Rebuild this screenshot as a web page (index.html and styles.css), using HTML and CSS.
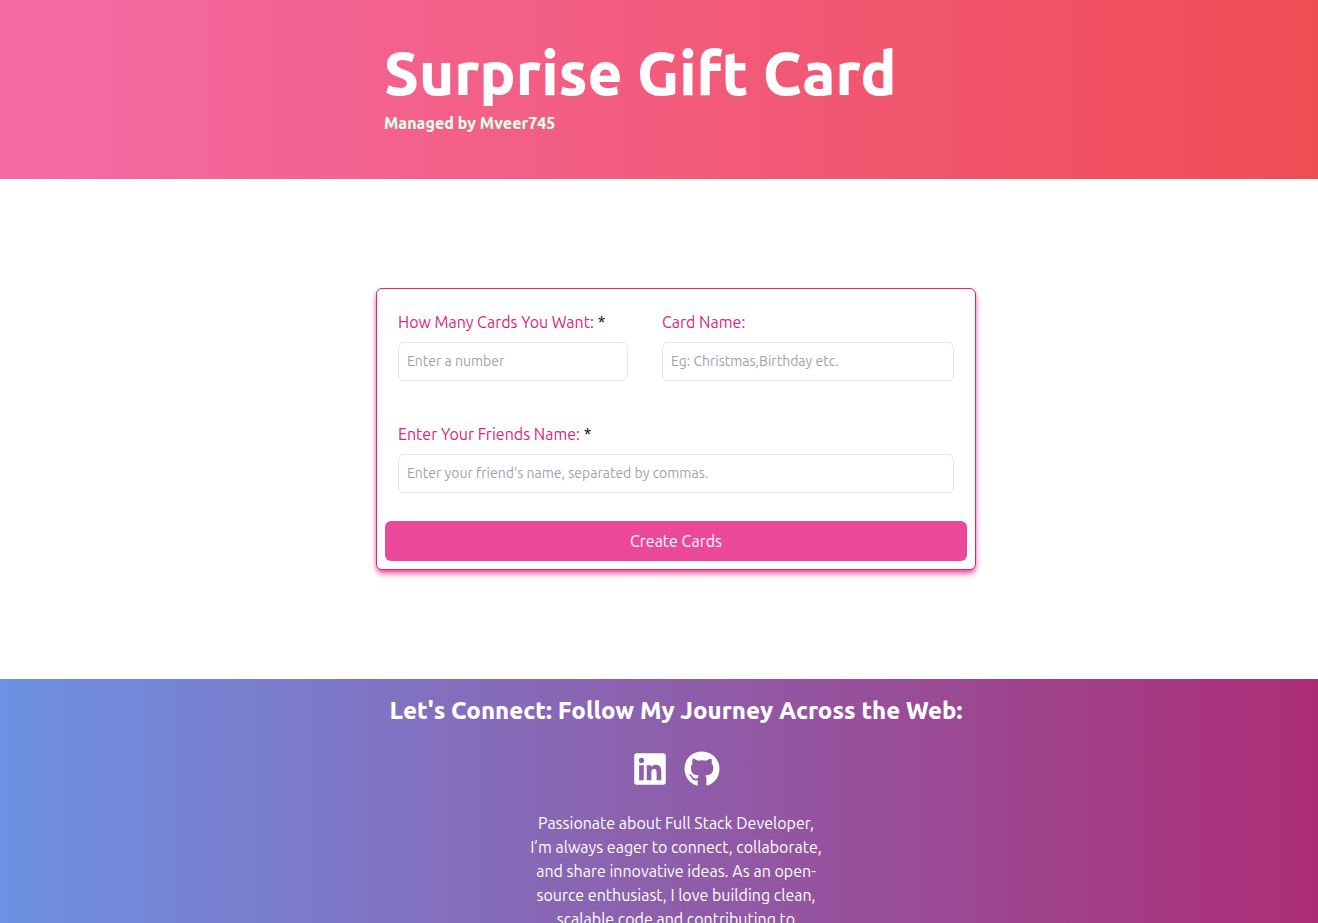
FILE: index.html
```html
<!DOCTYPE html>
<html lang="en">
<head>
<meta charset="utf-8">
<meta name="viewport" content="width=device-width, initial-scale=1">
<title>Surprise Gift Card</title>
<link rel="stylesheet" href="styles.css">
</head>
<body>
<header class="banner">
  <div class="banner-inner">
    <h1 class="banner-title">Surprise Gift Card</h1>
    <p class="banner-note">Managed by Mveer745</p>
  </div>
</header>
<main class="content">
  <form class="card">
    <div class="fields">
      <div class="field field-count">
        <label class="label" for="count">How Many Cards You Want: <span class="required">*</span></label>
        <input class="input" id="count" type="text" inputmode="numeric" placeholder="Enter a number" required>
      </div>
      <div class="field field-name">
        <label class="label" for="card-name">Card Name:</label>
        <input class="input" id="card-name" type="text" placeholder="Eg: Christmas,Birthday etc.">
      </div>
      <div class="field field-friends">
        <label class="label" for="friends">Enter Your Friends Name: <span class="required">*</span></label>
        <input class="input" id="friends" type="text" placeholder="Enter your friend's name, separated by commas." required>
      </div>
    </div>
    <button class="submit" type="submit">Create Cards</button>
  </form>
</main>
<footer class="footer">
  <h2 class="footer-title">Let's Connect: Follow My Journey Across the Web:</h2>
  <nav class="social" aria-label="Social links">
    <a href="#linkedin" aria-label="LinkedIn"><svg class="icon" viewBox="0 0 448 512" fill="currentColor"><path d="M416 32H31.900C14.300 32 0 46.500 0 64.300v383.400C0 465.500 14.300 480 31.900 480H416c17.600 0 32-14.500 32-32.300V64.300c0-17.800-14.400-32.300-32-32.300zM135.400 416H69V202.200h66.500V416zm-33.200-243c-21.300 0-38.500-17.300-38.500-38.500S80.900 96 102.200 96c21.200 0 38.500 17.300 38.500 38.500 0 21.300-17.200 38.500-38.500 38.500zm282.100 243h-66.400V312c0-24.800-.5-56.700-34.500-56.700-34.600 0-39.900 27-39.900 54.900V416h-66.400V202.200h63.700v29.200h.9c8.900-16.800 30.600-34.500 62.900-34.500 67.200 0 79.700 44.300 79.700 101.900V416z"/></svg></a>
    <a href="#github" aria-label="GitHub"><svg class="icon" viewBox="0 0 496 512" fill="currentColor"><path d="M165.900 397.400c0 2-2.300 3.600-5.200 3.600-3.300.3-5.600-1.300-5.600-3.600 0-2 2.300-3.600 5.200-3.600 3-.3 5.600 1.300 5.600 3.600zm-31.100-4.500c-.7 2 1.300 4.300 4.300 4.900 2.600 1 5.600 0 6.200-2s-1.300-4.300-4.300-5.200c-2.600-.7-5.500.3-6.200 2.300zm44.200-1.700c-2.900.7-4.900 2.600-4.600 4.900.3 2 2.900 3.300 5.900 2.600 2.900-.7 4.900-2.600 4.600-4.600-.3-1.900-3-3.200-5.900-2.900zM244.800 8C106.100 8 0 113.300 0 252c0 110.900 69.800 205.800 169.500 239.200 12.800 2.300 17.300-5.600 17.300-12.100 0-6.200-.3-40.400-.3-61.400 0 0-70 15-84.700-29.800 0 0-11.400-29.100-27.800-36.600 0 0-22.900-15.700 1.600-15.400 0 0 24.900 2 38.600 25.800 21.900 38.600 58.600 27.500 72.900 20.900 2.300-16 8.800-27.100 16-33.700-55.900-6.200-112.300-14.300-112.300-110.500 0-27.500 7.600-41.300 23.600-58.900-2.600-6.500-11.100-33.300 2.600-67.900 20.900-6.500 69 27 69 27 20-5.600 41.500-8.500 62.800-8.500s42.800 2.900 62.800 8.500c0 0 48.100-33.600 69-27 13.700 34.700 5.200 61.400 2.600 67.900 16 17.700 25.800 31.500 25.800 58.900 0 96.500-58.900 104.200-114.800 110.500 9.200 7.900 17 22.900 17 46.400 0 33.700-.3 75.400-.3 83.600 0 6.500 4.600 14.400 17.300 12.100C428.200 457.800 496 362.900 496 252 496 113.300 383.500 8 244.800 8zM97.200 352.900c-1.300 1-1 3.300.7 5.200 1.600 1.600 3.900 2.300 5.200 1 1.300-1 1-3.300-.7-5.200-1.600-1.600-3.900-2.300-5.200-1zm-10.800-8.100c-.7 1.300.3 2.900 2.300 3.900 1.600 1 3.600.7 4.300-.7.7-1.300-.3-2.900-2.300-3.900-2-.6-3.600-.3-4.300.7zm32.400 35.600c-1.600 1.300-1 4.300 1.300 6.200 2.300 2.300 5.200 2.600 6.500 1 1.300-1.300.7-4.300-1.300-6.200-2.200-2.300-5.200-2.600-6.500-1zm-11.400-14.700c-1.600 1-1.600 3.600 0 5.900 1.600 2.300 4.300 3.300 5.600 2.300 1.600-1.300 1.600-3.900 0-6.200-1.400-2.300-4-3.300-5.600-2z"/></svg></a>
  </nav>
  <p class="about">Passionate about Full Stack Developer, I’m always eager to connect, collaborate, and share innovative ideas. As an open-source enthusiast, I love building clean, scalable code and contributing to</p>
</footer>
</body>
</html>
```
FILE: styles.css
```css
*, *::before, *::after {
  box-sizing: border-box;
}

body {
  margin: 0;
  font-family: Ubuntu, "Noto Sans", sans-serif;
  font-size: 16px;
  font-weight: 400;
  line-height: 24px;
  color: #000;
  background: #fff;
}

h1, h2, p {
  margin: 0;
}

.banner,
.content,
.footer {
  padding-left: 34px;
}

.banner {
  padding-top: 43px;
  padding-bottom: 44px;
  background: linear-gradient(to right, #f46ba6, #f04c54);
}

.banner-inner {
  max-width: 600px;
  margin: 0 auto;
  padding: 0 8px;
}

.banner-title {
  font-size: 60px;
  line-height: 60px;
  font-weight: 800;
  color: #fff;
  white-space: nowrap;
}

.banner-note {
  padding-top: 8px;
  line-height: 24px;
  font-weight: 800;
  color: #dcfce7;
}

.content {
  display: grid;
  place-items: center;
  min-height: 500px;
}

.card {
  width: 100%;
  max-width: 600px;
  padding: 8px;
  border: 1px solid #db2777;
  border-radius: 6px;
  background: #fff;
  box-shadow: 0 4px 6px -1px #ec4899, 0 2px 4px -2px #ec4899;
}

.fields {
  display: grid;
  grid-template-columns: 230px 1fr;
  gap: 41px 34px;
  padding: 13px 13px 28px;
}

.field-friends {
  grid-column: 1 / -1;
}

.label {
  display: block;
  margin-bottom: 8px;
  color: #db2777;
  white-space: nowrap;
}

.required {
  color: #000;
}

.input {
  display: block;
  width: 100%;
  padding: 8px;
  border: 1px solid #e5e7eb;
  border-radius: 6px;
  font-family: inherit;
  font-size: 14px;
  line-height: 21px;
  color: #111827;
  background: #fff;
}

.input::placeholder {
  color: #9ca3af;
  opacity: 1;
}

.submit {
  display: block;
  width: 100%;
  padding: 8px;
  border: 0;
  border-radius: 6px;
  font: inherit;
  color: #fff;
  background: #ec4899;
  cursor: pointer;
}

.footer {
  padding-top: 16px;
  color: #fff;
  text-align: center;
  background: linear-gradient(to right, #6d91e3, #ad2d75);
}

.footer-title {
  font-size: 24px;
  line-height: 32px;
  font-weight: 800;
}

.social {
  display: flex;
  justify-content: center;
  gap: 16px;
  padding: 24px 0;
}

.social a {
  display: block;
  color: #fff;
}

.icon {
  display: block;
  width: 36px;
  height: 36px;
}

.about {
  max-width: 300px;
  margin: 0 auto;
}
```
